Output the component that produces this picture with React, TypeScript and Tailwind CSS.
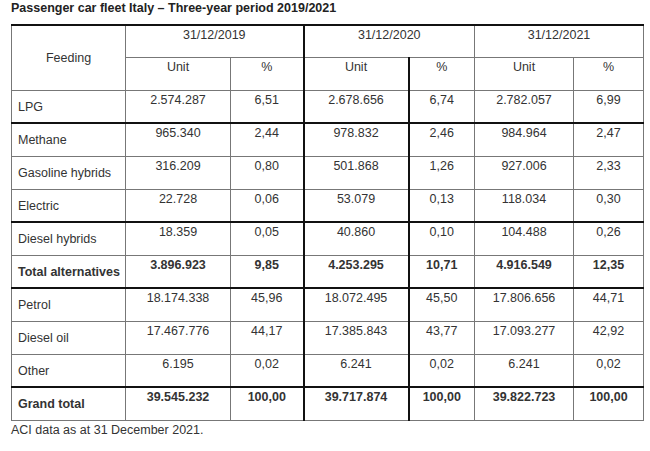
import React from "react";

type Row = { label: string; v: string[]; bold?: boolean; thickTop?: boolean };

const rows: Row[] = [
  { label: "LPG", v: ["2.574.287", "6,51", "2.678.656", "6,74", "2.782.057", "6,99"] },
  { label: "Methane", v: ["965.340", "2,44", "978.832", "2,46", "984.964", "2,47"], thickTop: true },
  { label: "Gasoline hybrids", v: ["316.209", "0,80", "501.868", "1,26", "927.006", "2,33"] },
  { label: "Electric", v: ["22.728", "0,06", "53.079", "0,13", "118.034", "0,30"] },
  { label: "Diesel hybrids", v: ["18.359", "0,05", "40.860", "0,10", "104.488", "0,26"], thickTop: true },
  { label: "Total alternatives", v: ["3.896.923", "9,85", "4.253.295", "10,71", "4.916.549", "12,35"], bold: true },
  { label: "Petrol", v: ["18.174.338", "45,96", "18.072.495", "45,50", "17.806.656", "44,71"], thickTop: true },
  { label: "Diesel oil", v: ["17.467.776", "44,17", "17.385.843", "43,77", "17.093.277", "42,92"] },
  { label: "Other", v: ["6.195", "0,02", "6.241", "0,02", "6.241", "0,02"] },
  { label: "Grand total", v: ["39.545.232", "100,00", "39.717.874", "100,00", "39.822.723", "100,00"], bold: true, thickTop: true },
];

export default function App() {
  return (
    <div
      className="w-[650px] h-[451px] bg-white text-[#333] text-[12.5px] leading-[14px] overflow-hidden"
      style={{ fontFamily: '"Liberation Sans", Arial, sans-serif' }}
    >
      <div className="pl-[11px] pt-[1px] h-[24px] font-bold text-[#222]">
        Passenger car fleet Italy – Three-year period 2019/2021
      </div>
      <div className="pl-[11px]">
        <table className="table-fixed border-collapse w-[632px]">
          <colgroup>
            <col className="w-[114px]" />
            <col className="w-[105px]" />
            <col className="w-[73px]" />
            <col className="w-[105px]" />
            <col className="w-[66px]" />
            <col className="w-[99px]" />
            <col className="w-[70px]" />
          </colgroup>
          <thead>
            <tr className="h-[32px]">
              <th
                rowSpan={2}
                className="border border-[#777] border-t-2 border-t-[#111] font-normal align-middle text-center"
              >
                Feeding
              </th>
              <th colSpan={2} className="border border-[#777] border-t-2 border-t-[#111] font-normal align-top pt-[2px] text-center">
                31/12/2019
              </th>
              <th colSpan={2} className="border border-[#777] border-t-2 border-t-[#111] border-l-2 border-l-[#111] font-normal align-top pt-[2px] text-center">
                31/12/2020
              </th>
              <th colSpan={2} className="border border-[#777] border-t-2 border-t-[#111] font-normal align-top pt-[2px] text-center">
                31/12/2021
              </th>
            </tr>
            <tr className="h-[33px]">
              <th className="border border-[#777] font-normal align-top pt-[2px] text-center">Unit</th>
              <th className="border border-[#777] font-normal align-top pt-[2px] text-center">%</th>
              <th className="border border-[#777] border-l-2 border-l-[#111] font-normal align-top pt-[2px] text-center">Unit</th>
              <th className="border border-[#777] border-l-2 border-l-[#111] font-normal align-top pt-[2px] text-center">%</th>
              <th className="border border-[#777] font-normal align-top pt-[2px] text-center">Unit</th>
              <th className="border border-[#777] font-normal align-top pt-[2px] text-center">%</th>
            </tr>
          </thead>
          <tbody>
            {rows.map((r) => {
              let trCls = "h-[33px]";
              if (r.bold) trCls += " font-bold";
              return (
                <tr key={r.label} className={trCls}>
                  <td
                    className={
                      r.thickTop
                        ? "border border-[#777] border-t-2 border-t-[#111] align-middle pl-[6px] pt-[1px]"
                        : "border border-[#777] align-middle pl-[6px] pt-[1px]"
                    }
                  >
                    {r.label}
                  </td>
                  {r.v.map((val, i) => {
                    const thickLeft = i === 2 || i === 3;
                    let cls = "border border-[#777] align-top pt-[2px] text-center";
                    if (r.thickTop) cls += " border-t-2 border-t-[#111]";
                    if (thickLeft) cls += " border-l-2 border-l-[#111]";
                    return (
                      <td key={i} className={cls}>
                        {val}
                      </td>
                    );
                  })}
                </tr>
              );
            })}
          </tbody>
        </table>
        <div className="pt-[2px]">ACI data as at 31 December 2021.</div>
      </div>
    </div>
  );
}
